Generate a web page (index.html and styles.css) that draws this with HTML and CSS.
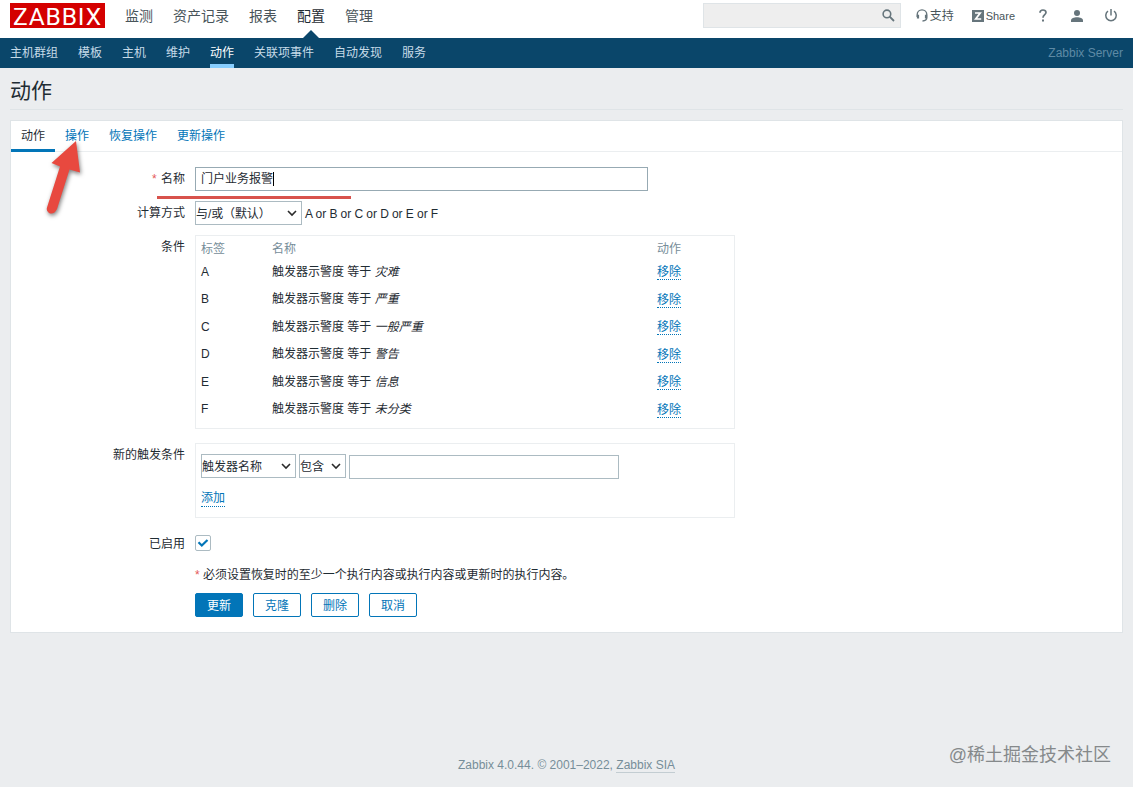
FILE: index.html
```html
<!DOCTYPE html>
<html lang="zh-CN">
<head>
<meta charset="utf-8">
<title>动作</title>
<link rel="stylesheet" href="styles.css">
</head>
<body>
<header class="top">
  <a class="logo"><svg width="95" height="25"><text x="3" y="21.500" textLength="88" lengthAdjust="spacing">ZABBIX</text></svg></a>
  <nav class="main-nav">
    <a>监测</a><a>资产记录</a><a>报表</a><a class="selected">配置</a><a>管理</a>
  </nav>
  <div class="tools">
    <div class="search">
      <svg width="13" height="13" viewBox="0 0 14 14" fill="none" stroke="#66757c"><circle cx="5.300" cy="5.300" r="4.100" stroke-width="1.700"/><path d="M8.300 8.300L12.900 12.900" stroke-width="2"/></svg>
    </div>
    <a class="support"><svg width="12" height="13" viewBox="0 0 12 13" fill="none" stroke="#66757c"><path d="M1.200 8V5.700a4.800 4.800 0 0 1 9.600 0V8.500c0 2-1 3.300-4.300 3.500" stroke-width="1.400"/><path d="M2 5.800v3.600M10 5.800v3.600" stroke-width="2.200"/></svg>支持</a>
    <a class="share"><svg width="12" height="12" viewBox="0 0 12 12"><path fill="#66757c" d="M0 0h12v12H0z"/><path d="M3 3h5.200L3.700 9H9.200" fill="none" stroke="#fff" stroke-width="1.700"/></svg>Share</a>
    <svg class="help" width="8" height="13" viewBox="0 0 8 13" fill="none" stroke="#66757c"><path d="M1 3.800C1 2 2.200 1 4 1s3 1 3 2.600C7 5.600 4 5.900 4 8.800" stroke-width="1.700"/><path d="M4 10.500v2" stroke-width="2"/></svg>
    <svg class="user" width="12" height="12" viewBox="0 0 12 12" fill="#66757c"><circle cx="6" cy="3" r="3"/><path d="M0 12v-1.500C0 8.500 3 7.300 6 7.300s6 1.200 6 3.200V12z"/></svg>
    <svg class="power" width="12" height="13" viewBox="0 0 12 13" fill="none" stroke="#66757c" stroke-width="1.500"><path d="M6 0v6.500M3 2.200a5.200 5.200 0 1 0 6 0"/></svg>
  </div>
</header>
<nav class="sub-nav">
  <a>主机群组</a><a>模板</a><a>主机</a><a>维护</a><a class="selected">动作</a><a>关联项事件</a><a>自动发现</a><a>服务</a>
  <span class="server">Zabbix Server</span>
</nav>
<h1>动作</h1>
<main class="card">
  <div class="tabs"><a class="selected">动作</a><a>操作</a><a>恢复操作</a><a>更新操作</a></div>
  <form class="form">
    <div class="label"><i class="req">*</i> 名称</div>
    <div class="field"><div class="input name-input">门户业务报警<span class="caret"></span></div></div>

    <div class="label">计算方式</div>
    <div class="field inline">
      <div class="select calc"><span>与/或（默认）</span><svg width="10" height="7" viewBox="0 0 10 7"><path d="M1 1l4 4 4-4"/></svg></div>
      <span class="formula">A or B or C or D or E or F</span>
    </div>

    <div class="label">条件</div>
    <div class="box conditions">
      <div class="row head"><span>标签</span><span>名称</span><span>动作</span></div>
      <div class="row"><span>A</span><span>触发器示警度 等于 <em>灾难</em></span><a class="link">移除</a></div>
      <div class="row"><span>B</span><span>触发器示警度 等于 <em>严重</em></span><a class="link">移除</a></div>
      <div class="row"><span>C</span><span>触发器示警度 等于 <em>一般严重</em></span><a class="link">移除</a></div>
      <div class="row"><span>D</span><span>触发器示警度 等于 <em>警告</em></span><a class="link">移除</a></div>
      <div class="row"><span>E</span><span>触发器示警度 等于 <em>信息</em></span><a class="link">移除</a></div>
      <div class="row"><span>F</span><span>触发器示警度 等于 <em>未分类</em></span><a class="link">移除</a></div>
    </div>

    <div class="label">新的触发条件</div>
    <div class="box new-condition">
      <div class="inline">
        <div class="select trigger"><span>触发器名称</span><svg width="10" height="7" viewBox="0 0 10 7"><path d="M1 1l4 4 4-4"/></svg></div>
        <div class="select operator"><span>包含</span><svg width="10" height="7" viewBox="0 0 10 7"><path d="M1 1l4 4 4-4"/></svg></div>
        <div class="input value-input"></div>
      </div>
      <a class="link">添加</a>
    </div>

    <div class="label enabled-label">已启用</div>
    <div class="field"><div class="checkbox"><svg width="12" height="10" viewBox="0 0 12 10"><path d="M1.500 4.200l3.300 3.300L10.500 2"/></svg></div></div>

    <div class="field note"><i class="req">*</i> 必须设置恢复时的至少一个执行内容或执行内容或更新时的执行内容。</div>
    <div class="field buttons"><a class="btn primary">更新</a><a class="btn">克隆</a><a class="btn">删除</a><a class="btn">取消</a></div>
  </form>
</main>
<footer>Zabbix 4.0.44. © 2001–2022, <a>Zabbix SIA</a></footer>
<div class="watermark">@稀土掘金技术社区</div>
<div class="underline-mark"></div>
<svg class="arrow-mark" width="50" height="86" viewBox="0 0 50 86"><path d="M35 3L39 34.500L28.500 31.500L16 71Q13 77 8 75Q5 73 6 69.500L19 28.500L10.500 25Z"/></svg>
</body>
</html>
```
FILE: styles.css
```css
* { box-sizing: border-box; }
body {
  margin: 0;
  height: 787px;
  position: relative;
  overflow: hidden;
  background: #ebedef;
  color: #1f2c33;
  font: 12px/16px "Liberation Sans", "Noto Sans CJK SC", sans-serif;
}
svg { display: block; flex: none; }
.top {
  display: flex;
  align-items: flex-start;
  height: 38px;
  padding: 3px 16px 0 10px;
  background: #fff;
}
.logo { background: #d40000; height: 25px; }
.logo svg { overflow: visible; }
.logo text { fill: #fff; font: 24.500px Roboto, "Liberation Sans", sans-serif; }
.main-nav { display: flex; gap: 20px; margin-left: 20px; height: 35px; }
.main-nav a { font-size: 14px; line-height: 26px; color: #48545a; position: relative; }
.main-nav .selected { color: #1f2c33; }
.main-nav .selected::after {
  content: "";
  position: absolute;
  left: 6px;
  bottom: 0;
  border: 8px solid transparent;
  border-top: 0;
  border-bottom-color: #0a466a;
}
.tools { display: flex; align-items: center; margin-left: auto; height: 25px; color: #48545a; }
.search {
  width: 198px;
  height: 25px;
  background: #eee;
  border: 1px solid #dfe4e7;
  display: flex;
  align-items: center;
  justify-content: flex-end;
  padding-right: 5px;
}
.support, .share { display: flex; align-items: center; gap: 2px; }
.support { margin-left: 15px; line-height: 14px; }
.share { margin-left: 18px; font-size: 11px; line-height: 14px; }
.help { margin-left: 24px; }
.user { margin-left: 24px; }
.power { margin-left: 22px; }
.sub-nav {
  display: flex;
  gap: 20px;
  height: 30px;
  padding: 0 10px;
  background: #0a466a;
}
.sub-nav a { line-height: 30px; color: #c6dbe8; }
.sub-nav .selected { color: #fff; box-shadow: inset 0 -4px #87ceff; }
.server { margin-left: auto; line-height: 30px; color: #5e8aa5; }
h1 {
  margin: 0 10px;
  height: 42px;
  border-bottom: 1px solid #dfe4e7;
  font-size: 21px;
  font-weight: 400;
  line-height: 45px;
}
.card {
  margin: 10px 10px 0;
  height: 513px;
  background: #fff;
  border: 1px solid #dfe4e7;
}
.tabs { display: flex; height: 31px; border-bottom: 1px solid #ebeef0; }
.tabs a { padding: 0 10px; line-height: 31px; color: #0275b8; height: 31px; }
.tabs .selected { color: #1f2c33; border-bottom: 3px solid #0275b8; }
.form {
  display: grid;
  grid-template-columns: 174px 540px;
  grid-template-rows: 34px 34px 208px 92px 31px 27px 24px;
  column-gap: 10px;
  padding-top: 15px;
}
.label { text-align: right; line-height: 24px; }
.enabled-label { line-height: 19px; }
.req { color: #e45959; font-style: normal; }
.label .req { margin-right: 1px; }
.inline { display: flex; align-items: flex-start; gap: 3px; }
.input { height: 24px; border: 1px solid #acbbc2; background: #fff; line-height: 22px; padding-left: 5px; display: flex; align-items: center; }
.name-input { width: 453px; border-color: #97aab3; }
.caret { width: 1px; height: 14px; background: #000; }
.select {
  height: 24px;
  border: 1px solid #acbbc2;
  display: flex;
  align-items: center;
  justify-content: space-between;
  padding: 1px 4px 0 0;
  white-space: nowrap;
}
.select path { fill: none; stroke: #2b2b2b; stroke-width: 1.600; }
.calc { width: 107px; }
.calc span { letter-spacing: -.1px; }
.formula { line-height: 26px; letter-spacing: -.06px; }
.box { border: 1px solid #ebeef0; padding: 4px 5px; }
.conditions { height: 194px; }
.row { display: grid; grid-template-columns: 71px 385px 40px; align-items: center; height: 27.500px; }
.row.head { height: 18px; line-height: 18px; align-items: start; color: #768d99; }
.link { color: #0275b8; line-height: 15px; border-bottom: 1px dotted #0275b8; display: inline-block; justify-self: start; }
.row .link { line-height: 16px; height: 16px; margin-top: .500px; }
.new-condition { height: 75px; padding-top: 10px; }
.new-condition .link { margin-top: 12px; }
.trigger { width: 95px; }
.operator { width: 47px; }
.value-input { width: 270px; margin-top: 1px; }
.checkbox { width: 16px; height: 16px; border: 1px solid #acbbc2; border-radius: 2px; padding: 2px 1px; }
.checkbox path { fill: none; stroke: #0275b8; stroke-width: 2.200; }
.note, .buttons { grid-column: 2; }
.note { line-height: 18px; letter-spacing: -.02px; }
.buttons { display: flex; gap: 10px; }
.btn { width: 48px; height: 24px; border: 1px solid #0275b8; border-radius: 2px; color: #0275b8; text-align: center; line-height: 24px; }
.primary { background: #0275b8; color: #fff; }
footer { margin-top: 124px; text-align: center; color: #768d99; }
footer a { border-bottom: 1px solid #c3cdd2; }
.watermark { position: absolute; right: 22px; top: 742px; font-size: 18px; line-height: 26px; color: #85898b; }
.underline-mark { position: absolute; left: 157px; top: 196px; width: 194px; height: 3px; background: #d8524c; }
.arrow-mark { position: absolute; left: 41px; top: 138px; fill: #e8493f; filter: drop-shadow(1px 2px 2px rgba(0, 0, 0, .5)); }
```
